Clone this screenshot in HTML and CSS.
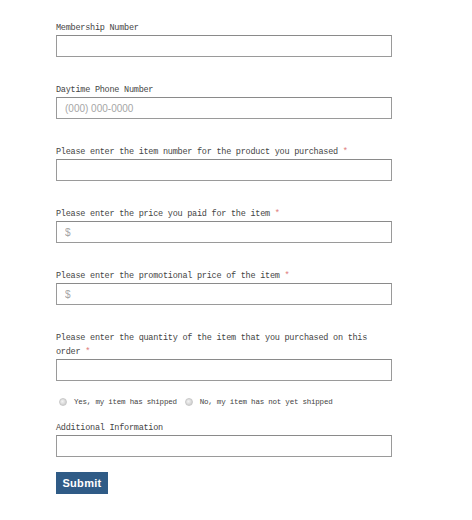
FILE: index.html
```html
<!DOCTYPE html>
<html>
<head>
<meta charset="utf-8">
<link rel="stylesheet" href="styles.css">
</head>
<body>
<form class="form">
  <div class="field">
    <label class="label">Membership Number</label>
    <input class="input" type="text">
  </div>
  <div class="field">
    <label class="label">Daytime Phone Number</label>
    <input class="input" type="text" placeholder="(000) 000-0000">
  </div>
  <div class="field">
    <label class="label">Please enter the item number for the product you purchased <span class="req">*</span></label>
    <input class="input" type="text">
  </div>
  <div class="field">
    <label class="label">Please enter the price you paid for the item <span class="req">*</span></label>
    <input class="input" type="text" placeholder="$">
  </div>
  <div class="field">
    <label class="label">Please enter the promotional price of the item <span class="req">*</span></label>
    <input class="input" type="text" placeholder="$">
  </div>
  <div class="field field-last">
    <label class="label">Please enter the quantity of the item that you purchased on this<br>order <span class="req">*</span></label>
    <input class="input" type="text">
  </div>
  <div class="radios">
    <label class="radio"><span class="dot"></span>Yes, my item has shipped</label>
    <label class="radio"><span class="dot"></span>No, my item has not yet shipped</label>
  </div>
  <div class="field field-info">
    <label class="label">Additional Information</label>
    <input class="input" type="text">
  </div>
  <button class="submit" type="button">Submit</button>
</form>
</body>
</html>
```
FILE: styles.css
```css
html, body {
  margin: 0;
  padding: 0;
  background: #ffffff;
}
.form {
  width: 336px;
  margin-left: 56px;
  padding-top: 21px;
  display: flex;
  flex-direction: column;
  align-items: flex-start;
}
.field {
  display: flex;
  flex-direction: column;
  width: 336px;
  margin-bottom: 26px;
}
.field-last {
  margin-bottom: 0;
}
.field-info {
  margin-bottom: 15px;
}
.label {
  display: block;
  font-family: "Liberation Mono", monospace;
  font-size: 8.5px;
  letter-spacing: -0.24px;
  line-height: 14px;
  color: #444444;
}
.req {
  color: #e07c7c;
}
.input {
  box-sizing: border-box;
  width: 336px;
  height: 22px;
  margin: 0;
  border: 1px solid #9a9a9a;
  border-top-color: #8a8a8a;
  padding: 0 8px;
  font-family: "Liberation Sans", Arial, sans-serif;
  font-size: 10px;
  color: #333;
  background: #fff;
  outline: none;
}
.input::placeholder {
  color: #a6a6a6;
}
.radios {
  display: flex;
  align-items: center;
  height: 14px;
  margin-top: 14px;
  margin-bottom: 12px;
}
.radio {
  display: flex;
  align-items: center;
  font-family: "Liberation Mono", monospace;
  font-size: 7.5px;
  letter-spacing: -0.22px;
  line-height: 14px;
  color: #444444;
  margin-right: 5px;
}
.dot {
  width: 6px;
  height: 6px;
  border-radius: 50%;
  background: radial-gradient(circle at 40% 40%, #f4f4f4, #c4c4c4);
  border: 1px solid #c8c8c8;
  margin-left: 3px;
  margin-right: 7px;
}
.submit {
  width: 52px;
  height: 22px;
  border: none;
  margin: 0;
  padding: 0;
  background: #2f5b86;
  color: #ffffff;
  font-family: "Liberation Sans", Arial, sans-serif;
  font-weight: bold;
  font-size: 11px;
  letter-spacing: 0.3px;
}
```
